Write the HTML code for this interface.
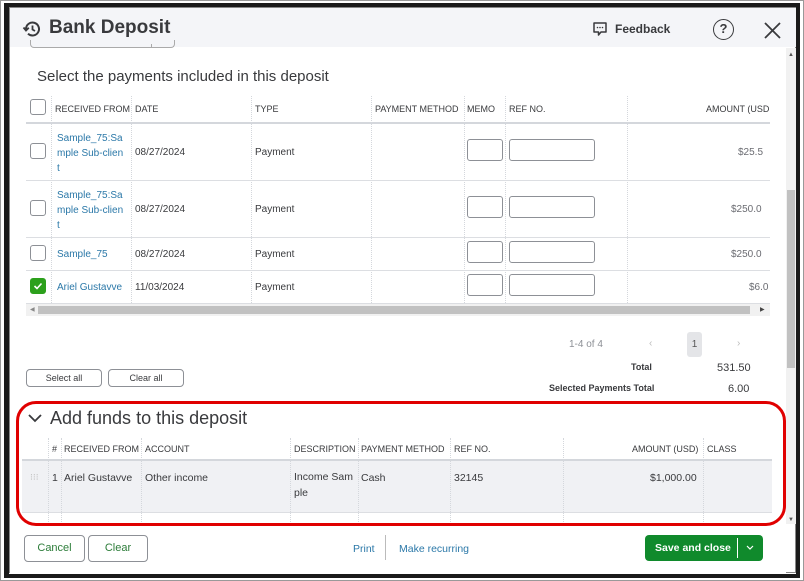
<!DOCTYPE html>
<html><head><meta charset="utf-8"><style>
*{margin:0;padding:0;box-sizing:border-box}
body{width:804px;height:581px;background:#fff;font-family:"Liberation Sans",sans-serif;position:relative;overflow:hidden;color:#393a3d}
.a{position:absolute}
.t{position:absolute;font-size:10px;white-space:nowrap}
.h{position:absolute;font-size:9px;color:#393a3d;white-space:nowrap}
.vl{position:absolute;width:0;border-left:1px dotted #d4d7dc}
.hl{position:absolute;height:1px;background:#dcdee2}
.cb{position:absolute;width:16px;height:16px;border:1px solid #8d9096;border-radius:3px;background:#fff}
.in{position:absolute;height:22px;border:1px solid #8d9096;border-radius:3px;background:#fff}
.lk{color:#2b78a8}
.btn{position:absolute;border:1px solid #8d9096;border-radius:4px;background:#fff;font-size:10px;text-align:center}
</style></head><body>
<div class="a" style="left:0;top:0;width:804px;height:581px;border:1px solid #999"></div>
<div class="a" style="left:4px;top:3px;width:796px;height:575px;border:4px solid #1a1a1a;border-left-width:5px"></div>
<div class="a" style="left:9px;top:7px;width:787px;height:566px;border:1px solid #888"></div>
<div class="a" style="left:10px;top:8px;width:786px;height:39px;background:#f4f5f8"></div>
<svg class="a" style="left:22px;top:19px" width="20" height="20" viewBox="0 0 20 20"><path d="M4 10a6.5 6.5 0 1 1 2 4.7" fill="none" stroke="#393a3d" stroke-width="2"/><path d="M1.5 8.5l2.5 3 2.8-2.8" fill="none" stroke="#393a3d" stroke-width="1.8"/><path d="M10.5 6.5v4l2.5 1.5" fill="none" stroke="#393a3d" stroke-width="1.8"/></svg>
<div class="a" style="left:49px;top:17px;font-size:19px;font-weight:bold;color:#393a3d">Bank Deposit</div>
<svg class="a" style="left:592px;top:21px" width="16" height="16" viewBox="0 0 16 16"><path d="M2 2h12v9H9l-2.5 3V11H2z" fill="none" stroke="#393a3d" stroke-width="1.5" stroke-linejoin="round"/><circle cx="5.5" cy="6.5" r=".8" fill="#393a3d"/><circle cx="8" cy="6.5" r=".8" fill="#393a3d"/><circle cx="10.5" cy="6.5" r=".8" fill="#393a3d"/></svg>
<div class="a" style="left:615px;top:22px;font-size:12px;font-weight:bold">Feedback</div>
<div class="a" style="left:713px;top:19px;width:21px;height:21px;border:1.8px solid #393a3d;border-radius:50%;font-size:13px;font-weight:bold;text-align:center;line-height:18px">?</div>
<svg class="a" style="left:764px;top:22px" width="17" height="17" viewBox="0 0 17 17"><path d="M1 1l15 15M16 1L1 16" stroke="#393a3d" stroke-width="1.8"/></svg>
<div class="a" style="left:30px;top:40px;width:145px;height:8px;border:1px solid #aaa;border-top:none;border-radius:0 0 4px 4px"></div>
<div class="a" style="left:151px;top:44px;width:1px;height:4px;background:#aaa"></div>
<div class="a" style="left:786px;top:48px;width:10px;height:476px;background:#f1f1f1"></div>
<div class="a" style="left:787px;top:190px;width:8px;height:178px;background:#c1c1c1"></div>
<div class="a" style="left:788px;top:52px;font-size:6px;color:#555">▲</div>
<div class="a" style="left:788px;top:517px;font-size:6px;color:#555">▼</div>

<div class="a" style="left:37px;top:68px;font-size:15px;color:#393a3d">Select the payments included in this deposit</div>
<div class="cb" style="left:30px;top:99px"></div>
<div class="h" style="left:55px;top:104px">RECEIVED FROM</div>
<div class="h" style="left:135px;top:104px">DATE</div>
<div class="h" style="left:255px;top:104px">TYPE</div>
<div class="h" style="left:375px;top:104px">PAYMENT METHOD</div>
<div class="h" style="left:467px;top:104px">MEMO</div>
<div class="h" style="left:509px;top:104px">REF NO.</div>
<div class="h" style="left:706px;top:104px">AMOUNT (USD</div>
<div class="hl" style="left:26px;top:122px;width:744px;height:2px;background:#d4d7dc"></div>
<div class="vl" style="left:51px;top:96px;height:207px"></div>
<div class="vl" style="left:131px;top:96px;height:207px"></div>
<div class="vl" style="left:251px;top:96px;height:207px"></div>
<div class="vl" style="left:371px;top:96px;height:207px"></div>
<div class="vl" style="left:464px;top:96px;height:207px"></div>
<div class="vl" style="left:505px;top:96px;height:207px"></div>
<div class="vl" style="left:627px;top:96px;height:207px"></div>

<div class="hl" style="left:26px;top:180px;width:744px"></div>
<div class="hl" style="left:26px;top:237px;width:744px"></div>
<div class="hl" style="left:26px;top:270px;width:744px"></div>
<div class="hl" style="left:26px;top:303px;width:744px"></div>

<div class="cb" style="left:30px;top:143px"></div>
<div class="t lk" style="left:57px;top:131px;line-height:15px;white-space:normal;width:74px">Sample_75:Sa<br>mple Sub-clien<br>t</div>
<div class="t" style="left:135px;top:147px">08/27/2024</div>
<div class="t" style="left:255px;top:147px">Payment</div>
<div class="in" style="left:467px;top:139px;width:36px"></div>
<div class="in" style="left:509px;top:139px;width:86px"></div>
<div class="t" style="left:738px;top:147px;color:#6b6c72">$25.5</div>

<div class="cb" style="left:30px;top:200px"></div>
<div class="t lk" style="left:57px;top:188px;line-height:15px;white-space:normal;width:74px">Sample_75:Sa<br>mple Sub-clien<br>t</div>
<div class="t" style="left:135px;top:204px">08/27/2024</div>
<div class="t" style="left:255px;top:204px">Payment</div>
<div class="in" style="left:467px;top:196px;width:36px"></div>
<div class="in" style="left:509px;top:196px;width:86px"></div>
<div class="t" style="left:731px;top:204px;color:#6b6c72">$250.0</div>

<div class="cb" style="left:30px;top:245px"></div>
<div class="t lk" style="left:57px;top:249px">Sample_75</div>
<div class="t" style="left:135px;top:249px">08/27/2024</div>
<div class="t" style="left:255px;top:249px">Payment</div>
<div class="in" style="left:467px;top:241px;width:36px"></div>
<div class="in" style="left:509px;top:241px;width:86px"></div>
<div class="t" style="left:731px;top:249px;color:#6b6c72">$250.0</div>

<div class="cb" style="left:30px;top:278px;background:#2ca01c;border-color:#2ca01c"></div>
<svg class="a" style="left:33px;top:281px" width="10" height="10" viewBox="0 0 10 10"><path d="M1.5 5l2.5 2.5 4.5-5" fill="none" stroke="#fff" stroke-width="1.6"/></svg>
<div class="t lk" style="left:57px;top:282px">Ariel Gustavve</div>
<div class="t" style="left:135px;top:282px">11/03/2024</div>
<div class="t" style="left:255px;top:282px">Payment</div>
<div class="in" style="left:467px;top:274px;width:36px"></div>
<div class="in" style="left:509px;top:274px;width:86px"></div>
<div class="t" style="left:749px;top:282px;color:#6b6c72">$6.0</div>

<div class="a" style="left:26px;top:304px;width:744px;height:12px;background:#f1f1f1"></div>
<div class="a" style="left:38px;top:306px;width:712px;height:8px;background:#c1c1c1"></div>
<div class="a" style="left:30px;top:306px;font-size:6px;color:#888">◀</div>
<div class="a" style="left:760px;top:306px;font-size:6px;color:#444">▶</div>

<div class="t" style="left:569px;top:339px;font-size:10px;color:#8d9096">1-4 of 4</div>
<div class="t" style="left:649px;top:338px;color:#bbb">‹</div>
<div class="a" style="left:687px;top:332px;width:15px;height:25px;background:#e4e5e8;border-radius:3px;font-size:10px;text-align:center;line-height:25px;color:#555">1</div>
<div class="t" style="left:737px;top:338px;color:#bbb">›</div>
<div class="t" style="left:631px;top:362px;font-size:9px;font-weight:bold">Total</div>
<div class="t" style="left:717px;top:362px;font-size:11px">531.50</div>
<div class="t" style="left:549px;top:383px;font-size:9px;font-weight:bold">Selected Payments Total</div>
<div class="t" style="left:728px;top:383px;font-size:11px">6.00</div>

<div class="btn" style="left:26px;top:369px;width:76px;height:18px;font-size:9px;line-height:16px;color:#393a3d">Select all</div>
<div class="btn" style="left:108px;top:369px;width:76px;height:18px;font-size:9px;line-height:16px;color:#393a3d">Clear all</div>

<svg class="a" style="left:28px;top:413px" width="14" height="10" viewBox="0 0 14 10"><path d="M1 2l6 6 6-6" fill="none" stroke="#393a3d" stroke-width="1.8"/></svg>
<div class="a" style="left:50px;top:408px;font-size:18px;color:#393a3d">Add funds to this deposit</div>
<div class="a" style="left:22px;top:460px;width:750px;height:53px;background:#f0f1f4"></div>
<div class="hl" style="left:22px;top:459px;width:750px;height:2px;background:#d4d7dc"></div>
<div class="hl" style="left:22px;top:512px;width:750px"></div>
<div class="h" style="left:52px;top:444px">#</div>
<div class="h" style="left:64px;top:444px">RECEIVED FROM</div>
<div class="h" style="left:145px;top:444px">ACCOUNT</div>
<div class="h" style="left:294px;top:444px">DESCRIPTION</div>
<div class="h" style="left:361px;top:444px">PAYMENT METHOD</div>
<div class="h" style="left:454px;top:444px">REF NO.</div>
<div class="h" style="left:632px;top:444px">AMOUNT (USD)</div>
<div class="h" style="left:707px;top:444px">CLASS</div>
<div class="vl" style="left:48px;top:438px;height:90px"></div>
<div class="vl" style="left:61px;top:438px;height:90px"></div>
<div class="vl" style="left:141px;top:438px;height:90px"></div>
<div class="vl" style="left:290px;top:438px;height:90px"></div>
<div class="vl" style="left:358px;top:438px;height:90px"></div>
<div class="vl" style="left:450px;top:438px;height:90px"></div>
<div class="vl" style="left:563px;top:438px;height:90px"></div>
<div class="vl" style="left:703px;top:438px;height:90px"></div>
<div class="t" style="left:30px;top:472px;color:#bbb;font-size:9px">⁝⁝⁝</div>
<div class="t" style="left:52px;top:472px;font-size:10.5px">1</div>
<div class="t" style="left:64px;top:472px;font-size:10.5px">Ariel Gustavve</div>
<div class="t" style="left:145px;top:472px;font-size:10.5px">Other income</div>
<div class="t" style="left:294px;top:469px;font-size:10.5px;line-height:16px">Income Sam<br>ple</div>
<div class="t" style="left:361px;top:472px;font-size:10.5px">Cash</div>
<div class="t" style="left:454px;top:472px;font-size:10.5px">32145</div>
<div class="t" style="left:650px;top:472px;font-size:10.5px">$1,000.00</div>
<div class="a" style="left:16px;top:401px;width:770px;height:125px;border:3px solid #e00000;border-radius:20px"></div>
<div class="a" style="left:10px;top:527px;width:776px;height:46px;background:#fff"></div>
<div class="btn" style="left:24px;top:535px;width:61px;height:27px;line-height:25px;color:#2d7d3a;font-size:11px">Cancel</div>
<div class="btn" style="left:88px;top:535px;width:60px;height:27px;line-height:25px;color:#2d7d3a;font-size:11px">Clear</div>
<div class="t lk" style="left:353px;top:543px;font-size:10.5px">Print</div>
<div class="a" style="left:385px;top:535px;width:1px;height:25px;background:#bbb"></div>
<div class="t lk" style="left:399px;top:543px;font-size:10.5px">Make recurring</div>
<div class="a" style="left:645px;top:535px;width:118px;height:26px;background:#108a2c;border-radius:4px"></div>
<div class="a" style="left:737px;top:538px;width:1px;height:20px;background:#fff"></div>
<div class="t" style="left:655px;top:542px;font-size:10.5px;font-weight:bold;color:#fff">Save and close</div>
<svg class="a" style="left:746px;top:545px" width="8" height="6" viewBox="0 0 8 6"><path d="M1 1l3 3 3-3" fill="none" stroke="#fff" stroke-width="1.2"/></svg>
</body></html>
